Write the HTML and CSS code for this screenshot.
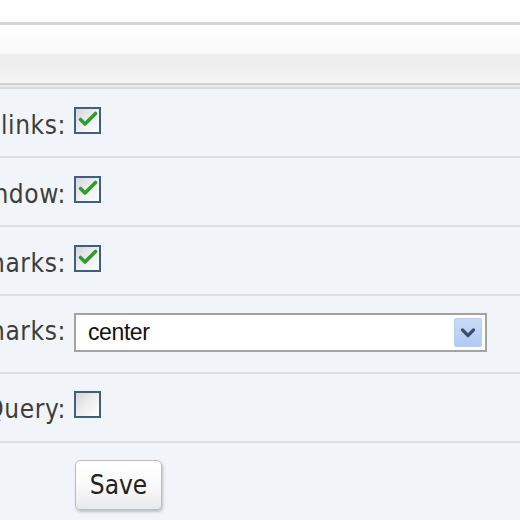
FILE: index.html
```html
<!DOCTYPE html>
<html>
<head>
<meta charset="utf-8">
<link rel="stylesheet" href="styles.css">
</head>
<body>
<div class="page">
  <div class="topgap"></div>
  <div class="toolbar"></div>
  <div class="rule-light"></div>
  <div class="rule-dark"></div>
  <form class="form">
    <div class="row">
      <label class="label">Open external links:</label>
      <div class="ctrl">
        <span class="cb checked"><svg viewBox="0 0 23 23" width="23" height="23"><path d="M4.5 10.5 L9 15 L19.5 4.5" fill="none" stroke="#2f9e32" stroke-width="3.6" stroke-linecap="round" stroke-linejoin="round"/></svg></span>
      </div>
    </div>
    <div class="row">
      <label class="label">Open links in new window:</label>
      <div class="ctrl">
        <span class="cb checked"><svg viewBox="0 0 23 23" width="23" height="23"><path d="M4.5 10.5 L9 15 L19.5 4.5" fill="none" stroke="#2f9e32" stroke-width="3.6" stroke-linecap="round" stroke-linejoin="round"/></svg></span>
      </div>
    </div>
    <div class="row">
      <label class="label">Show bookmarks:</label>
      <div class="ctrl">
        <span class="cb checked"><svg viewBox="0 0 23 23" width="23" height="23"><path d="M4.5 10.5 L9 15 L19.5 4.5" fill="none" stroke="#2f9e32" stroke-width="3.6" stroke-linecap="round" stroke-linejoin="round"/></svg></span>
      </div>
    </div>
    <div class="row row-select">
      <label class="label">Position of bookmarks:</label>
      <div class="ctrl">
        <div class="select">
          <span class="select-text">center</span>
          <span class="select-btn"><svg viewBox="0 0 16 10" width="16" height="10"><path d="M2.5 2 L8 7.5 L13.5 2" fill="none" stroke="#3e4f6c" stroke-width="3.2" stroke-linecap="round" stroke-linejoin="round"/></svg></span>
        </div>
      </div>
    </div>
    <div class="row row-last">
      <label class="label">Load jQuery:</label>
      <div class="ctrl">
        <span class="cb"></span>
      </div>
    </div>
    <div class="actions">
      <button type="button" class="btn">Save</button>
    </div>
  </form>
</div>
</body>
</html>
```
FILE: styles.css
```css
html, body {
  margin: 0;
  padding: 0;
  width: 520px;
  height: 520px;
  overflow: hidden;
  background: #ffffff;
}

.page {
  width: 520px;
  overflow: hidden;
  font-family: "DejaVu Sans Condensed", "DejaVu Sans", Verdana, sans-serif;
  font-stretch: condensed;
}

.topgap {
  height: 22px;
  background: #ffffff;
}

.toolbar {
  height: 58px;
  border-top: 3px solid #d6d6d6;
  border-bottom: 2px solid #cfcfcf;
  background: linear-gradient(to bottom, #fefefe 0%, #f9f9f9 48%, #ececec 52%, #f0f0f0 80%, #f5f5f5 100%);
}

.rule-light {
  height: 2px;
  background: #ebebeb;
}

.rule-dark {
  height: 2px;
  background: #d9dadb;
}

.form {
  margin: 0;
  background: #f1f5f9;
  padding-bottom: 20px;
}

.row {
  display: flex;
  align-items: baseline;
  height: 69px;
  box-sizing: border-box;
  padding-top: 18px;
  border-bottom: 2px solid #dce0e4;
}

.row-select {
  height: 78px;
  padding-top: 17px;
}

.row-last {
  padding-top: 17px;
}

.label {
  flex: 0 0 500px;
  min-width: 0;
  margin-left: -434px;
  text-align: right;
  font-size: 26px;
  line-height: 30px;
  letter-spacing: 0.6px;
  color: #3d3d3d;
  white-space: nowrap;
}

.ctrl {
  display: flex;
  align-items: baseline;
  margin-left: 8px;
}

.cb {
  display: inline-block;
  width: 27px;
  height: 27px;
  box-sizing: border-box;
  border: 2px solid #3f5e82;
  background: linear-gradient(135deg, #d6d6d6 0%, #eeeeee 50%, #ffffff 100%);
}

.cb svg {
  display: block;
}

.select {
  display: flex;
  align-items: baseline;
  width: 413px;
  height: 39px;
  box-sizing: border-box;
  border: 2px solid #a3a3a3;
  background: #ffffff;
  padding-left: 12px;
}

.select-text {
  font-family: "Liberation Sans", Arial, sans-serif;
  font-stretch: normal;
  font-size: 23px;
  letter-spacing: -0.4px;
  line-height: 35px;
  color: #111111;
}

.select-btn {
  align-self: center;
  margin-left: auto;
  margin-right: 3px;
  width: 28px;
  height: 29px;
  border-radius: 3px;
  background: linear-gradient(to bottom, #cadcf9 0%, #afc8f3 100%);
  box-shadow: inset 0 0 0 1px #b9cef3;
  display: flex;
  align-items: center;
  justify-content: center;
}

.select-btn svg {
  display: block;
}

.actions {
  padding-top: 17px;
  padding-left: 75px;
}

.btn {
  width: 87px;
  height: 50px;
  box-sizing: border-box;
  border: 1px solid #bdbdbd;
  border-radius: 5px;
  background: linear-gradient(to bottom, #ffffff 0%, #fafafa 50%, #e9e9e9 100%);
  box-shadow: 1px 2px 3px rgba(0, 0, 0, 0.22);
  font-family: "DejaVu Sans Condensed", "DejaVu Sans", Verdana, sans-serif;
  font-stretch: condensed;
  font-size: 26px;
  color: #222222;
  padding: 0;
  margin: 0;
}
```
